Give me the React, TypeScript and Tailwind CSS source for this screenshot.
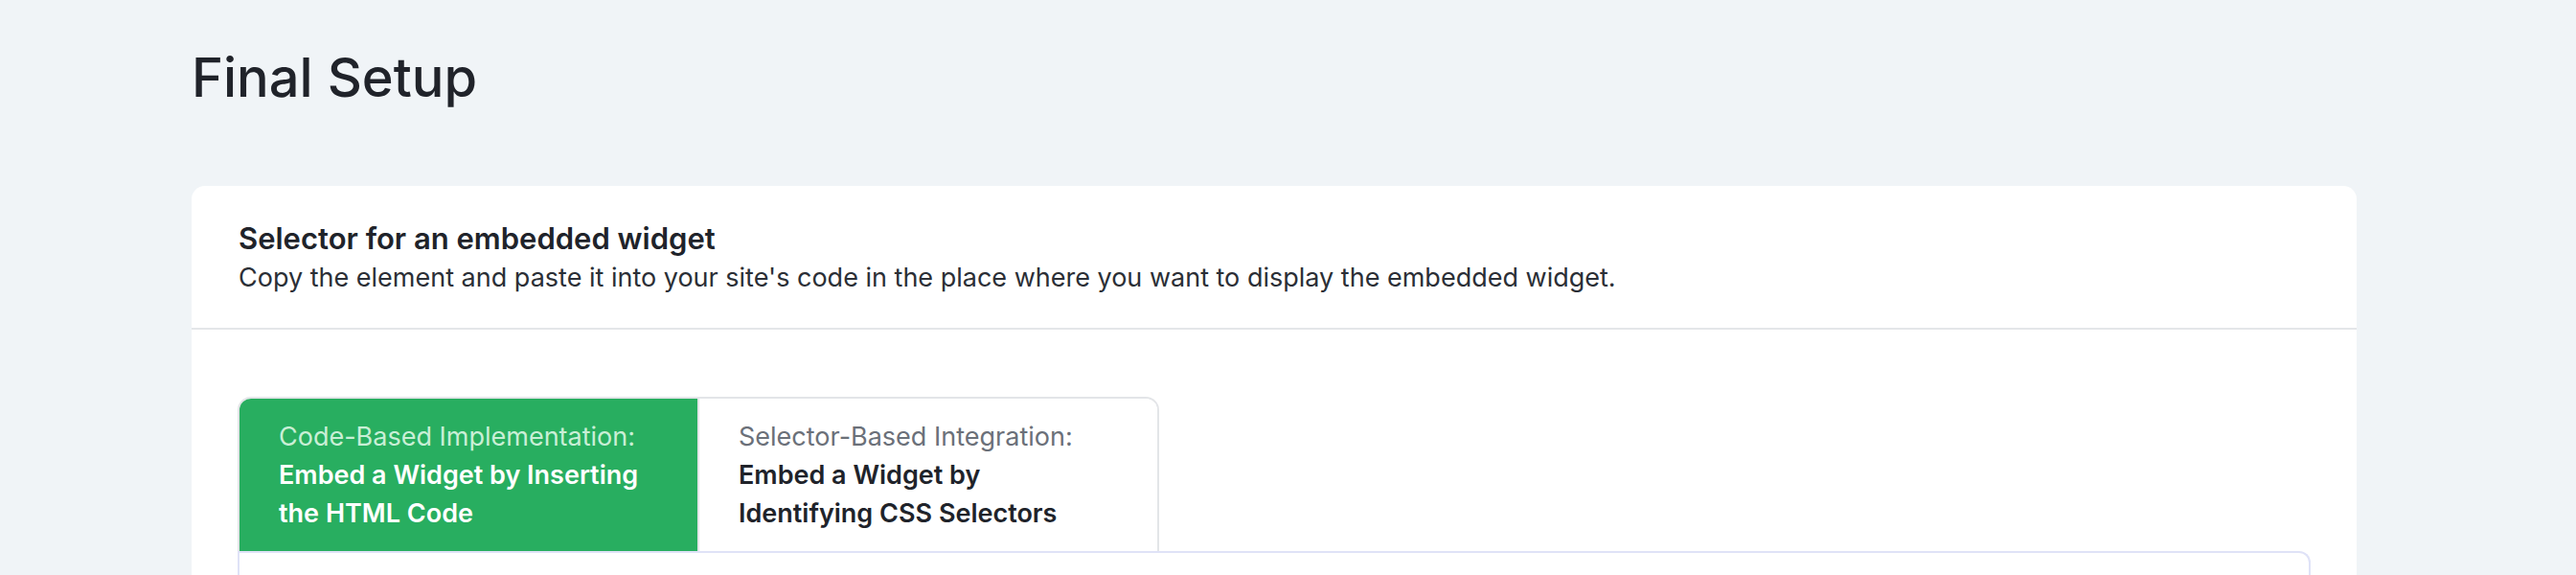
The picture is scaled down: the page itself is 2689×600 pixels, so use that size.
import React from "react";

const font = { fontFamily: "Inter, 'Noto Sans', sans-serif" };

interface TabProps {
  kicker: string;
  title: string;
  active: boolean;
}

function Tab({ kicker, title, active }: TabProps) {
  return (
    <div
      className={`w-[478px] px-[41px] pt-[20px] pb-[19px] text-[27px] leading-[40px] ${
        active ? "bg-[#28ae60]" : "bg-white"
      }`}
    >
      <div className={active ? "text-[#c9efd6]" : "text-[#6b7079]"}>{kicker}</div>
      <div className={`font-semibold ${active ? "text-white" : "text-[#20232a]"}`}>{title}</div>
    </div>
  );
}

export default function App() {
  return (
    <div className="min-h-[600px] bg-[#f0f4f7] text-[#20232a]" style={font}>
      <div className="pl-[200px] pr-[229px]">
        {/* Titre de page */}
        <h1 className="pt-[48px] pb-[80px] text-[56px] leading-[66px] font-medium">
          Final Setup
        </h1>

        {/* Carte */}
        <div className="rounded-t-[14px] bg-white">
          <div className="px-[49px] pt-[34px] pb-[32px] border-b-2 border-[#e4e6e9]">
            <div className="text-[31px] leading-[41px] font-semibold">
              Selector for an embedded widget
            </div>
            <div className="text-[27px] leading-[41px] text-[#2b2f36]">
              Copy the element and paste it into your site's code in the place where you want to display the embedded widget.
            </div>
          </div>

          <div className="px-[48px] pt-[70px]">
            {/* Onglets */}
            <div className="flex w-fit rounded-t-[14px] border-2 border-b-0 border-[#e3e5e8] overflow-hidden">
              <Tab
                active
                kicker="Code-Based Implementation:"
                title="Embed a Widget by Inserting the HTML Code"
              />
              <div className="w-[2px] bg-[#e3e5e8]" />
              <Tab
                active={false}
                kicker="Selector-Based Integration:"
                title="Embed a Widget by Identifying CSS Selectors"
              />
            </div>
            <div>
              <div className="h-[2px] w-[958px] bg-[#e3e5e8]" />
              <div className="h-[60px] -mt-[2px] rounded-tr-[12px] border-2 border-b-0 border-[#dfe2f7]" />
            </div>
          </div>
        </div>
      </div>
    </div>
  );
}
